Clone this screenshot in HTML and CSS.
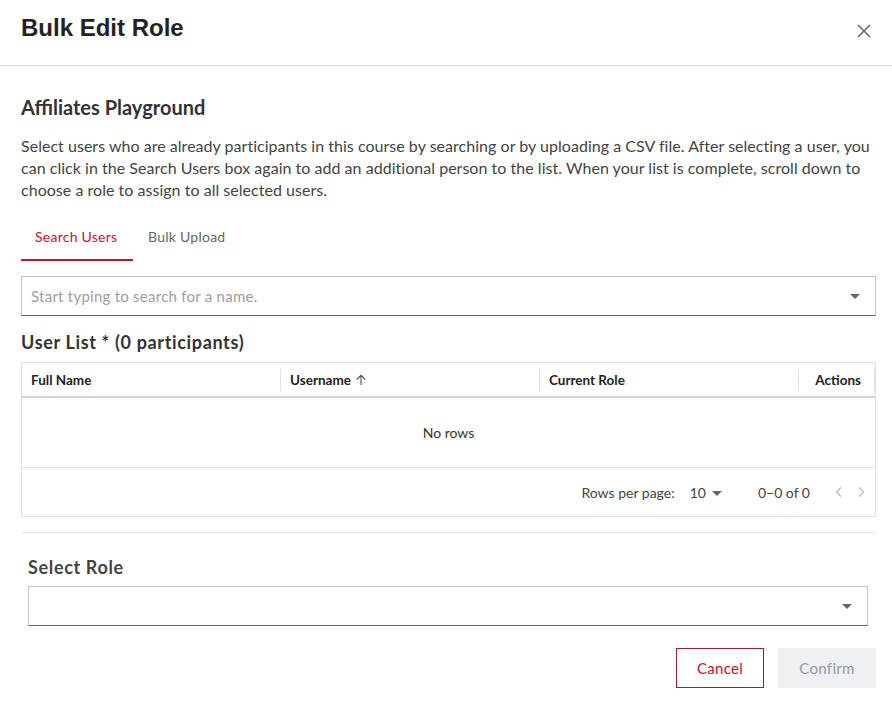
FILE: index.html
```html
<!DOCTYPE html>
<html lang="en">
<head>
<meta charset="utf-8">
<title>Bulk Edit Role</title>
<link rel="stylesheet" href="styles.css">
</head>
<body>
<div class="dialog">
  <div class="header">
    <h1 class="title">Bulk Edit Role</h1>
    <button class="close" aria-label="Close">
      <svg width="14" height="14" viewBox="0 0 14 14"><path d="M1 1L13 13M13 1L1 13" stroke="#6b6b6b" stroke-width="1.6" fill="none"/></svg>
    </button>
  </div>
  <div class="content">
    <h2 class="course">Affiliates Playground</h2>
    <p class="intro">Select users who are already participants in this course by searching or by uploading a CSV file. After selecting a user, you can click in the Search Users box again to add an additional person to the list. When your list is complete, scroll down to choose a role to assign to all selected users.</p>
    <div class="tabs">
      <div class="tab active">Search Users</div>
      <div class="tab">Bulk Upload</div>
    </div>
    <div class="field search">
      <span class="placeholder">Start typing to search for a name.</span>
      <span class="caret"></span>
    </div>
    <h3 class="list-title">User List * (0 participants)</h3>
    <div class="table">
      <div class="thead">
        <div class="th">Full Name<span class="sep"></span></div>
        <div class="th">Username <svg class="sort" width="12" height="12" viewBox="0 0 12 12"><path d="M6 11V1.5M1.8 5.5L6 1.3L10.2 5.5" stroke="#555" stroke-width="1.1" fill="none"/></svg><span class="sep"></span></div>
        <div class="th">Current Role<span class="sep"></span></div>
        <div class="th actions">Actions<span class="sep"></span></div>
      </div>
      <div class="tbody">No rows</div>
      <div class="tfoot">
        <span class="rpp">Rows per page:</span>
        <span class="rpp-select">10<span class="caret small"></span></span>
        <span class="range">0–0 of 0</span>
        <span class="nav">
          <svg width="10" height="12" viewBox="0 0 10 12"><path d="M7 1.5L2.5 6L7 10.5" stroke="#bdbdbd" stroke-width="1.3" fill="none"/></svg>
          <svg width="10" height="12" viewBox="0 0 10 12"><path d="M3 1.5L7.5 6L3 10.5" stroke="#bdbdbd" stroke-width="1.3" fill="none"/></svg>
        </span>
      </div>
    </div>
    <hr class="divider">
    <div class="role">
      <h3 class="role-title">Select Role</h3>
      <div class="field select"><span class="caret"></span></div>
    </div>
    <div class="buttons">
      <button class="btn cancel">Cancel</button>
      <button class="btn confirm">Confirm</button>
    </div>
  </div>
</div>
</body>
</html>
```
FILE: styles.css
```css
* { box-sizing: border-box; }
body {
  margin: 0;
  font-family: "Lato", "Noto Sans", sans-serif;
  color: #333;
  background: #fff;
}
.dialog { width: 892px; }
.header {
  height: 66px;
  padding: 13px 21px 0 21px;
  display: flex;
  align-items: flex-start;
  justify-content: space-between;
  border-bottom: 1px solid #e0e0e0;
}
.title {
  margin: 0;
  font-family: "Liberation Sans", "Roboto", sans-serif;
  font-weight: 700;
  font-size: 24px;
  line-height: 30px;
  color: #222;
}
.close {
  border: 0;
  background: none;
  padding: 0;
  margin: 11px 0 0 0;
  width: 14px;
  height: 14px;
  display: block;
}
.close svg { display: block; }
.content { padding: 0 16px 0 21px; }
.course {
  margin: 29px 0 0 0;
  font-size: 20px;
  line-height: 24px;
  font-weight: 700;
  color: #333;
}
.intro {
  margin: 16px 0 0 0;
  font-size: 16px;
  letter-spacing: 0.03px;
  line-height: 22px;
  color: #444;
}
.tabs {
  margin-top: 12px;
  display: flex;
  height: 48px;
}
.tab {
  padding: 0 15px;
  font-size: 14px;
  letter-spacing: 0.25px;
  line-height: 48px;
  color: #666;
  border-bottom: 2px solid transparent;
  height: 48px;
}
.tab.active {
  color: #c8102e;
  border-bottom-color: #c8102e;
  min-width: 112px;
  padding-left: 14px;
}
.field {
  height: 40px;
  border: 1px solid #c4c4c4;
  border-bottom-color: #666;
  display: flex;
  align-items: center;
  padding: 0 15px 0 9px;
}
.search { margin-top: 15px; }
.placeholder {
  font-size: 15px;
  letter-spacing: 0.25px;
  color: #9e9e9e;
  flex: 1;
}
.caret {
  width: 0;
  height: 0;
  border-left: 5px solid transparent;
  border-right: 5px solid transparent;
  border-top: 5px solid #666;
  margin-left: auto;
}
.caret.small { display: inline-block; margin-left: 6px; vertical-align: middle; }
.list-title {
  margin: 14px 0 0 0;
  font-size: 18px;
  letter-spacing: 0.65px;
  line-height: 24px;
  font-weight: 700;
  color: #333;
}
.table {
  margin-top: 8px;
  border: 1px solid #e0e0e0;
  width: 855px;
}
.thead {
  display: grid;
  grid-template-columns: 259px 259px 259px 76px;
  height: 35px;
  border-bottom: 2px solid #d4d4d4;
}
.th {
  position: relative;
  display: flex;
  align-items: center;
  padding: 0 10px 0 9px;
  font-size: 13.5px;
  font-weight: 700;
  color: #222;
}
.th.actions { justify-content: flex-end; padding-right: 14px; }
.sort { margin-left: 4px; }
.sep {
  position: absolute;
  right: 0;
  top: 6px;
  bottom: 5px;
  width: 1px;
  background: #e0e0e0;
}
.tbody {
  height: 70px;
  display: flex;
  align-items: center;
  justify-content: center;
  font-size: 14px;
  color: #333;
  border-bottom: 1px solid #e0e0e0;
}
.tfoot {
  height: 48px;
  display: flex;
  align-items: center;
  justify-content: flex-end;
  padding-right: 9px;
  font-size: 14px;
  color: #444;
}
.rpp-select { margin-left: 15px; font-size: 14px; }
.range { margin-left: 36px; }
.nav { margin-left: 24px; display: flex; gap: 12px; }
.nav svg { display: block; }
.divider {
  margin: 15px 0 0 0;
  border: 0;
  border-top: 1px solid #e6e6e6;
  width: 855px;
}
.role { padding: 0 8px 0 7px; }
.role-title {
  margin: 22px 0 0 0;
  font-size: 18px;
  letter-spacing: 0.65px;
  line-height: 24px;
  font-weight: 700;
  color: #444;
}
.select { margin-top: 7px; }
.buttons {
  margin-top: 22px;
  display: flex;
  justify-content: flex-end;
  gap: 14px;
  width: 855px;
}
.btn {
  height: 40px;
  font-family: "Lato", "Noto Sans", sans-serif;
  font-size: 15px;
  letter-spacing: 0.3px;
  border-radius: 0;
  cursor: pointer;
}
.cancel {
  width: 88px;
  background: #fff;
  border: 1px solid #a6192e;
  color: #c8102e;
}
.confirm {
  width: 98px;
  background: #eff0f2;
  border: 0;
  color: #8f9bab;
}
```
